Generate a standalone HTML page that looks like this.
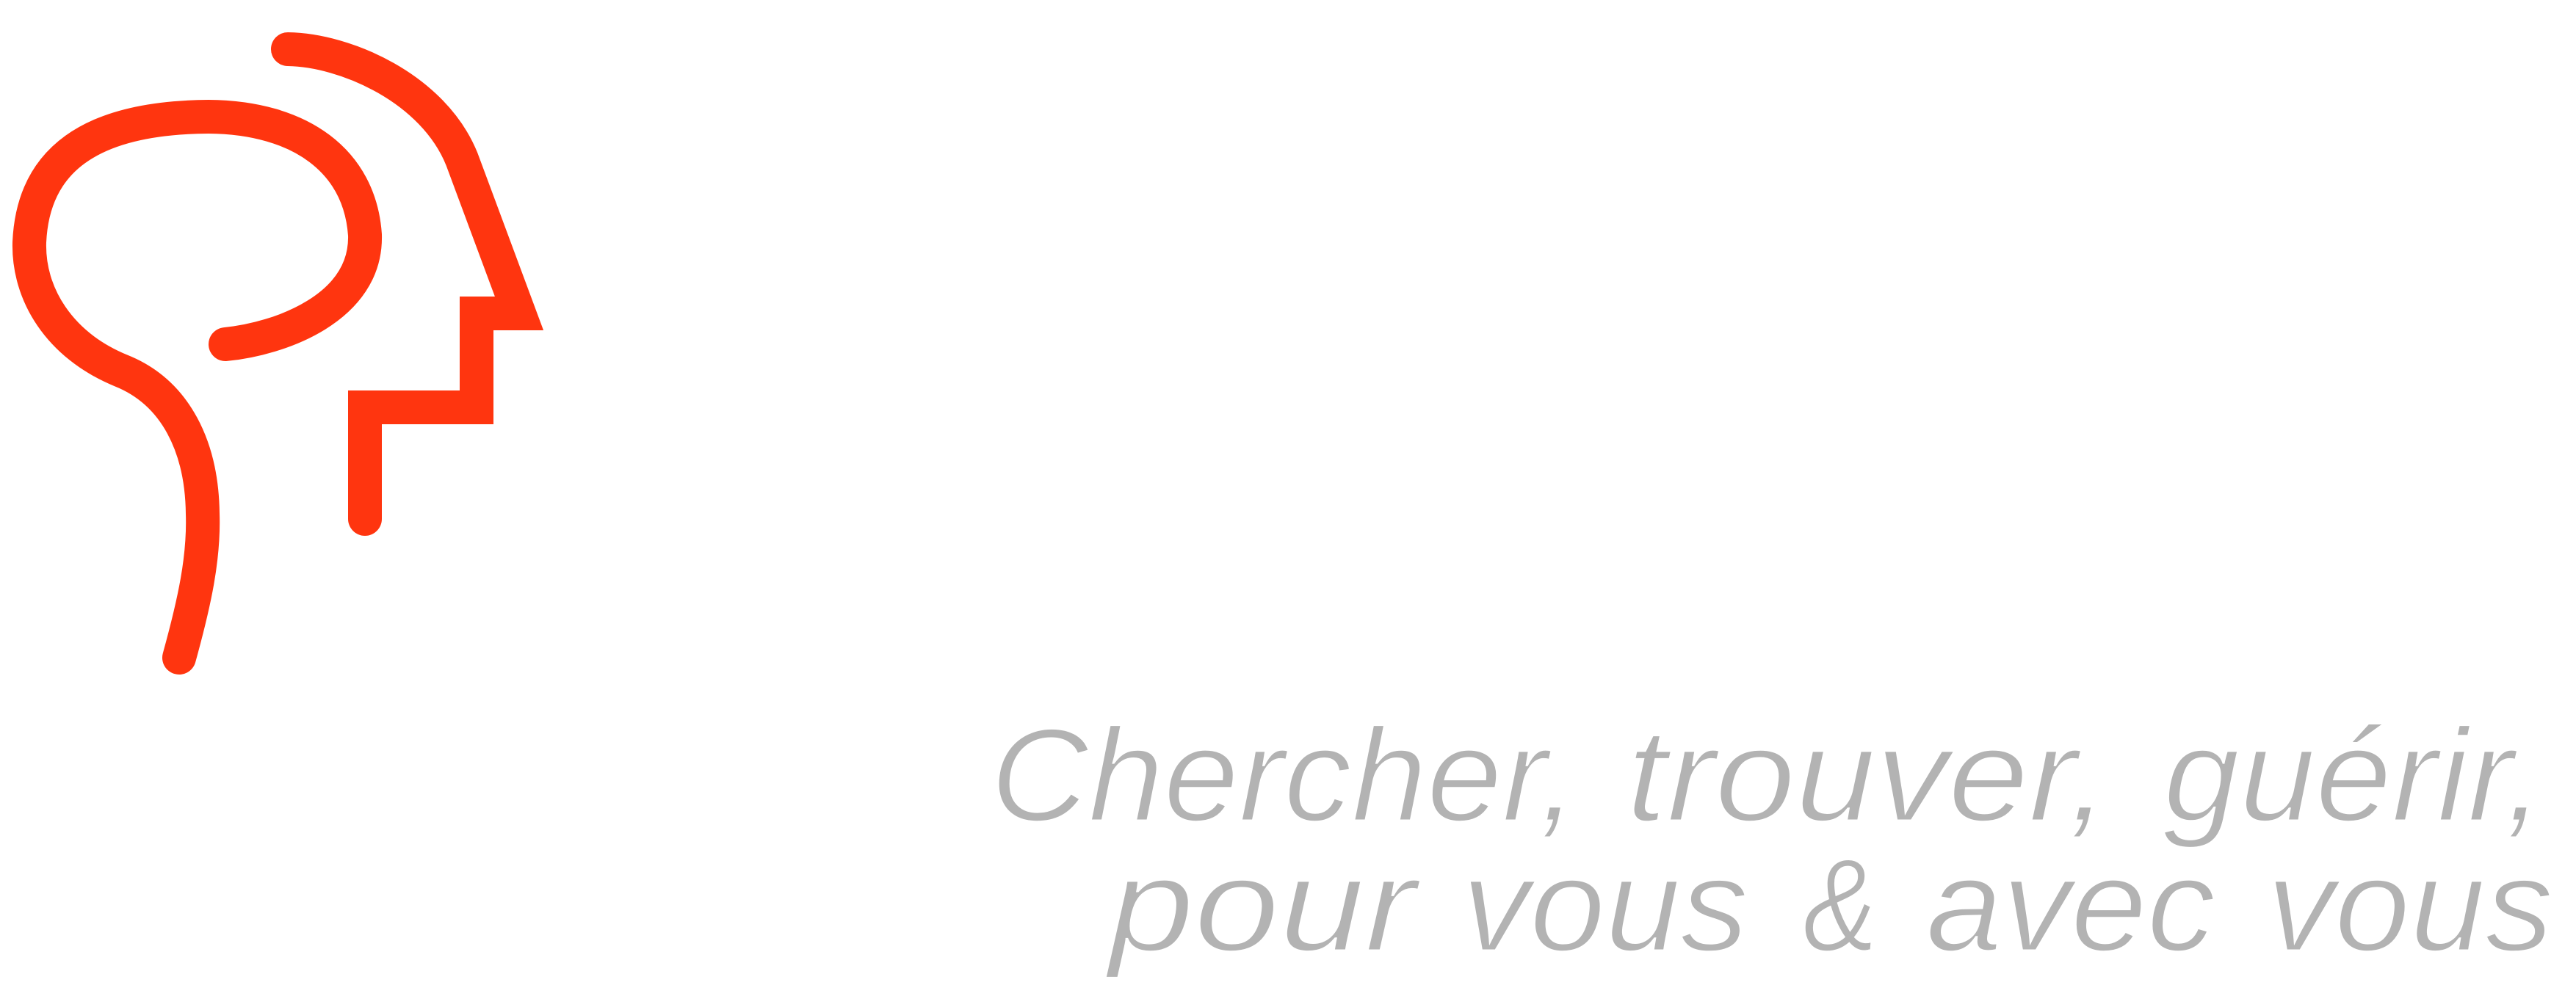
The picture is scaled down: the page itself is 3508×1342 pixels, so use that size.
<!DOCTYPE html>
<html><head><meta charset="utf-8"><style>
html,body{margin:0;padding:0;background:#fff;}
svg{display:block;}
text{font-family:"Liberation Sans",sans-serif;font-style:italic;font-size:180px;fill:#b3b3b3;stroke:#fff;stroke-width:3px;paint-order:fill stroke;}
</style></head><body>
<svg width="3508" height="1342" viewBox="0 0 3508 1342" xmlns="http://www.w3.org/2000/svg">
<g fill="none" stroke="#ff350f" stroke-width="46" stroke-linecap="round" stroke-linejoin="miter">
<path d="M244,896 C265,820 278,760 276,700 C275,610 240,535 165,505 C80,470 38,400 40,330 C45,220 120,160 284,159 C410,160 490,220 497,320 C500,420 380,462 307,469"/>
<path d="M392,67 C470,68 590,120 629,217 L707,427 L649,427 L649,555 L497,555 L497,707"/>
</g>
<text x="1349" y="1118" textLength="799" lengthAdjust="spacingAndGlyphs">Chercher,</text>
<text x="2215" y="1118" textLength="657" lengthAdjust="spacingAndGlyphs">trouver,</text>
<text x="2946" y="1118" textLength="518" lengthAdjust="spacingAndGlyphs">guérir,</text>
<text x="1510" y="1295" textLength="418" lengthAdjust="spacingAndGlyphs">pour</text>
<text x="1991" y="1295" textLength="390" lengthAdjust="spacingAndGlyphs">vous</text>
<text x="2455" y="1295" textLength="102" lengthAdjust="spacingAndGlyphs">&amp;</text>
<text x="2623" y="1295" textLength="394" lengthAdjust="spacingAndGlyphs">avec</text>
<text x="3087" y="1295" textLength="390" lengthAdjust="spacingAndGlyphs">vous</text>
</svg>
</body></html>
